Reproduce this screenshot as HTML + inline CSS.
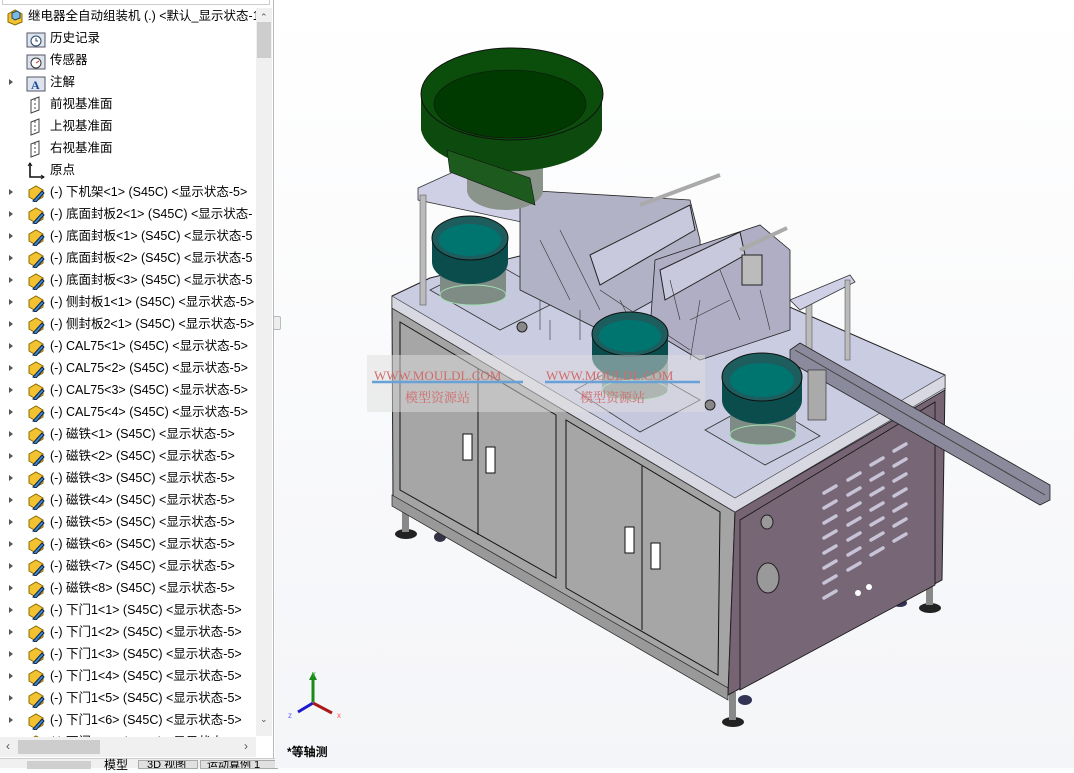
<!DOCTYPE html>
<html><head><meta charset="utf-8"><style>
*{margin:0;padding:0;box-sizing:border-box}
body{width:1074px;height:768px;overflow:hidden;background:#fff;font-family:"Liberation Sans","Noto Sans CJK SC",sans-serif;position:relative}
#tree{position:absolute;left:0;top:0;width:274px;height:768px;background:#fff;border-right:1px solid #b9b9b9}
.row{position:absolute;left:0;height:22px;font-size:12.5px;color:#000;white-space:nowrap;line-height:22px}
.row .ar{position:absolute;left:9px;top:8px;width:0;height:0;border-left:4px solid #555;border-top:3.5px solid transparent;border-bottom:3.5px solid transparent}
.row .ic{position:absolute;left:26px;top:3px;width:18px;height:16px}
.row .tx{position:absolute;left:50px;top:0}
#vs{position:absolute;left:256px;top:8px;width:16px;height:728px;background:#f0f0f0}
#vs .th{position:absolute;left:1px;top:14px;width:14px;height:36px;background:#cdcdcd}
#hs{position:absolute;left:0;top:737px;width:256px;height:20px;background:#f0f0f0}
#hs .th{position:absolute;left:18px;top:3px;width:82px;height:14px;background:#cdcdcd}
#tabs{position:absolute;left:0;top:758px;width:1074px;height:10px;background:#f0f0f0;border-top:1px solid #ccc;font-size:12px}
#vp{position:absolute;left:275px;top:0;width:799px;height:768px}
</style></head><body>
<div id="tree">
<div style="position:absolute;left:2px;top:0;width:268px;height:5px;border:1px solid #ccc;border-top:none"></div>
<div id="rows"></div>
<div id="vs"><div style="position:absolute;left:4px;top:4px;font-size:9px;color:#555">&#8963;</div><div class="th"></div><div style="position:absolute;left:4px;top:706px;font-size:9px;color:#555">&#8964;</div></div>
<div id="hs"><div style="position:absolute;left:6px;top:2px;font-size:12px;color:#555">&lsaquo;</div><div class="th"></div><div style="position:absolute;left:244px;top:2px;font-size:12px;color:#555">&rsaquo;</div></div>
</div>
<div id="tabs">
<div style="position:absolute;left:27px;top:2px;width:64px;height:8px;background:#cfcfcf"></div>
<div style="position:absolute;left:104px;top:-3px;font-size:12px">模型</div>
<div style="position:absolute;left:138px;top:1px;width:60px;height:9px;background:#e0e0e0;border:1px solid #aaa;font-size:11px;line-height:9px;padding-left:8px;overflow:hidden">3D 视图</div>
<div style="position:absolute;left:200px;top:1px;width:78px;height:9px;background:#e0e0e0;border:1px solid #aaa;font-size:11px;line-height:9px;padding-left:6px;overflow:hidden">运动算例 1</div>
</div>
<div id="vp">
<svg width="799" height="768" viewBox="275 0 799 768" xmlns="http://www.w3.org/2000/svg">
<defs><linearGradient id="bg" x1="0" y1="0" x2="0" y2="1"><stop offset="0" stop-color="#fff"/><stop offset="1" stop-color="#f4f5f8"/></linearGradient></defs>
<rect x="275" y="0" width="799" height="768" fill="url(#bg)"/>
<g fill="#222"><ellipse cx="406" cy="534" rx="11" ry="5"/><ellipse cx="733" cy="722" rx="11" ry="5"/><ellipse cx="930" cy="608" rx="11" ry="5"/><ellipse cx="440" cy="537" rx="6" ry="5" fill="#334"/><ellipse cx="745" cy="700" rx="7" ry="5" fill="#335"/><ellipse cx="900" cy="603" rx="7" ry="4" fill="#335"/></g>
<g fill="#888"><rect x="402" y="510" width="7" height="22"/><rect x="729" y="692" width="7" height="28"/><rect x="926" y="585" width="7" height="20"/></g>
<polygon points="392,308 735,512 728,695 393,500" fill="#a4a4a4" stroke="#222" stroke-width="1"/>
<polygon points="400,322 556,415 556,578 400,490" fill="#a6a6a6" stroke="#111" stroke-width="1"/>
<line x1="478" y1="368" x2="478" y2="535" stroke="#111"/>
<polygon points="566,420 720,512 718,675 566,588" fill="#a6a6a6" stroke="#111" stroke-width="1"/>
<line x1="642" y1="466" x2="642" y2="630" stroke="#111"/>
<polygon points="392,495 728,688 728,700 392,506" fill="#999" stroke="#222" stroke-width="0.7"/>
<rect x="463" y="434" width="9" height="26" fill="#fff" stroke="#111"/><rect x="486" y="447" width="9" height="26" fill="#fff" stroke="#111"/>
<rect x="625" y="527" width="9" height="26" fill="#fff" stroke="#111"/><rect x="651" y="543" width="9" height="26" fill="#fff" stroke="#111"/>
<polygon points="735,512 945,385 942,580 728,695" fill="#766474" stroke="#222" stroke-width="1"/>
<polygon points="740,520 935,402 935,585 740,690" fill="#776676" stroke="#111" stroke-width="0.8"/>
<g stroke="#c8c4d8" stroke-width="3.5" stroke-linecap="round">
<path d="M824,493l12,-7M824,508l12,-7M824,523l12,-7M824,538l12,-7M824,553l12,-7M824,568l12,-7M824,583l12,-7M824,598l12,-7"/>
<path d="M848,480l12,-7M848,495l12,-7M848,510l12,-7M848,525l12,-7M848,540l12,-7M848,555l12,-7M848,570l12,-7"/>
<path d="M871,465l12,-7M871,480l12,-7M871,495l12,-7M871,510l12,-7M871,525l12,-7M871,540l12,-7M871,555l12,-7"/>
<path d="M894,451l12,-7M894,466l12,-7M894,481l12,-7M894,496l12,-7M894,511l12,-7M894,526l12,-7M894,541l12,-7"/>
</g>
<ellipse cx="767" cy="522" rx="6" ry="7" fill="#999" stroke="#222"/>
<ellipse cx="768" cy="578" rx="11" ry="15" fill="#999" stroke="#222"/>
<circle cx="858" cy="593" r="3" fill="#fff"/><circle cx="869" cy="587" r="3" fill="#fff"/>
<polygon points="392,296 430,278 618,232 945,375 945,390 735,512 392,308" fill="#cacce2" stroke="#222" stroke-width="1"/>
<polygon points="392,296 735,498 945,375 945,388 735,512 392,308" fill="#d8d8e2" stroke="#333" stroke-width="0.6"/>
<polygon points="418,188 462,168 700,240 700,260 418,200" fill="#cfd0e6" stroke="#333" stroke-width="0.8"/>
<rect x="420" y="195" width="6" height="110" fill="#bbb" stroke="#444" stroke-width="0.5"/>
<rect x="806" y="300" width="6" height="70" fill="#bbb" stroke="#444" stroke-width="0.5"/>
<polygon points="790,300 850,275 855,282 800,310" fill="#cfd0e6" stroke="#333" stroke-width="0.8"/>
<rect x="845" y="280" width="5" height="80" fill="#bbb" stroke="#444" stroke-width="0.5"/>
<polygon points="430,290 490,260 560,300 500,330" fill="#c6c8de" stroke="#333" stroke-width="0.8"/>
<polygon points="575,390 630,360 700,400 640,432" fill="#c6c8de" stroke="#333" stroke-width="0.8"/>
<polygon points="705,430 760,400 820,436 765,465" fill="#c6c8de" stroke="#333" stroke-width="0.8"/>
<circle cx="522" cy="327" r="5" fill="#888" stroke="#222"/><circle cx="710" cy="405" r="5" fill="#888" stroke="#222"/>
<polygon points="520,190 690,200 700,240 700,275 600,330 520,290" fill="#b2b2c6" stroke="#222" stroke-width="0.8"/>
<polygon points="590,255 690,205 695,230 600,285" fill="#c9c9dd" stroke="#222"/>
<polygon points="655,260 760,225 790,250 790,330 700,360 650,330" fill="#b0aec4" stroke="#222" stroke-width="0.8"/>
<polygon points="660,270 740,232 745,255 665,300" fill="#c9c9dd" stroke="#222"/>
<rect x="742" y="255" width="20" height="30" fill="#bbb" stroke="#222"/>
<line x1="640" y1="205" x2="720" y2="175" stroke="#aaa" stroke-width="4"/>
<line x1="740" y1="250" x2="787" y2="228" stroke="#aaa" stroke-width="4"/>
<g stroke="#333" stroke-width="0.6" fill="none"><path d="M540,240l30,60M560,230l40,80M600,290l90,60M700,300l-10,60M620,300l20,40M540,300l0,30M580,310l0,30M550,320l0,20M670,280l10,40M720,270l20,50M760,290l10,40M690,320l40,-20"/></g>
<polygon points="790,350 800,343 1050,485 1050,500 1040,505 790,362" fill="#8a8a9c" stroke="#222" stroke-width="0.8"/>
<line x1="795" y1="350" x2="1045" y2="495" stroke="#444"/>
<rect x="808" y="370" width="18" height="50" fill="#aaa" stroke="#222" stroke-width="0.6"/>
<ellipse cx="505" cy="190" rx="38" ry="20" fill="#8a948a"/>
<rect x="467" y="165" width="76" height="25" fill="#8a948a"/>
<path d="M421,94 L421,130 A91,46 0 0 0 602,130 L602,94 Z" fill="#0d4a0d"/>
<ellipse cx="512" cy="94" rx="91" ry="46" fill="#0b4e0b" stroke="#111"/>
<ellipse cx="510" cy="104" rx="76" ry="34" fill="#003a00" stroke="#111" stroke-width="0.6"/>
<polygon points="447,150 530,178 535,205 450,172" fill="#1d5a1d" stroke="#111" stroke-width="0.6"/>
<g>
<rect x="440" y="255" width="66" height="40" fill="#7f8c86"/><ellipse cx="473" cy="295" rx="33" ry="10" fill="#7f8c86" stroke="#9fe0b0"/>
<path d="M432,240 L432,262 A38,22 0 0 0 508,262 L508,240 Z" fill="#0b4d4d"/>
<ellipse cx="470" cy="238" rx="38" ry="22" fill="#1d5d5d" stroke="#111"/><ellipse cx="470" cy="240" rx="31" ry="16" fill="#007570"/>
</g>
<g>
<rect x="602" y="350" width="66" height="40" fill="#7f8c86"/><ellipse cx="635" cy="390" rx="33" ry="10" fill="#7f8c86" stroke="#9fe0b0"/>
<path d="M592,335 L592,357 A38,22 0 0 0 668,357 L668,335 Z" fill="#0b4d4d"/>
<ellipse cx="630" cy="334" rx="38" ry="22" fill="#1d5d5d" stroke="#111"/><ellipse cx="630" cy="336" rx="31" ry="16" fill="#007570"/>
</g>
<g>
<rect x="730" y="395" width="66" height="40" fill="#7f8c86"/><ellipse cx="763" cy="435" rx="33" ry="10" fill="#7f8c86" stroke="#9fe0b0"/>
<path d="M722,378 L722,400 A40,24 0 0 0 802,400 L802,378 Z" fill="#0b4d4d"/>
<ellipse cx="762" cy="377" rx="40" ry="24" fill="#1d5d5d" stroke="#111"/><ellipse cx="762" cy="380" rx="32" ry="17" fill="#007570"/>
</g>
<rect x="367" y="355" width="338" height="57" fill="#ddd" opacity="0.5"/>
<line x1="372" y1="382" x2="523" y2="382" stroke="#68a0d8" stroke-width="2.5"/>
<line x1="545" y1="382" x2="700" y2="382" stroke="#68a0d8" stroke-width="2.5"/>
<text x="374" y="380" font-family="Liberation Serif,serif" font-size="13" fill="#d06b6b">WWW.MOULDL.COM</text>
<text x="546" y="380" font-family="Liberation Serif,serif" font-size="13" fill="#d06b6b">WWW.MOULDL.COM</text>
<text x="405" y="402" font-family="Noto Serif CJK SC,serif" font-size="13" fill="#d06b6b">模型资源站</text>
<text x="580" y="402" font-family="Noto Serif CJK SC,serif" font-size="13" fill="#d06b6b">模型资源站</text>
<line x1="313" y1="702" x2="313" y2="678" stroke="#1a8a1a" stroke-width="3"/><polygon points="309,680 317,680 313,672" fill="#1a8a1a"/>
<line x1="313" y1="703" x2="298" y2="712" stroke="#1a1acc" stroke-width="3"/>
<line x1="313" y1="703" x2="332" y2="713" stroke="#aa1a1a" stroke-width="3"/>
<text x="312" y="676" font-size="7" fill="#2a2">y</text><text x="288" y="718" font-size="8" fill="#66f">z</text><text x="337" y="718" font-size="8" fill="#f55">x</text>
<text x="287" y="756" font-family="Liberation Sans,Noto Sans CJK SC,sans-serif" font-size="12" font-weight="bold" fill="#000">*等轴测</text>
</svg>
</div>
<div style="position:absolute;left:273px;top:316px;width:8px;height:14px;background:#eee;border:1px solid #bbb;border-radius:2px"></div>
<script>
var items=[
[0,'top','继电器全自动组装机 (.) &lt;默认_显示状态-1:'],
[0,'hist','历史记录'],[0,'sens','传感器'],[1,'ann','注解'],
[0,'pl','前视基准面'],[0,'pl','上视基准面'],[0,'pl','右视基准面'],[0,'org','原点']];
var parts=['下机架&lt;1&gt; (S45C) &lt;显示状态-5&gt;','底面封板2&lt;1&gt; (S45C) &lt;显示状态-','底面封板&lt;1&gt; (S45C) &lt;显示状态-5','底面封板&lt;2&gt; (S45C) &lt;显示状态-5','底面封板&lt;3&gt; (S45C) &lt;显示状态-5','侧封板1&lt;1&gt; (S45C) &lt;显示状态-5&gt;','侧封板2&lt;1&gt; (S45C) &lt;显示状态-5&gt;','CAL75&lt;1&gt; (S45C) &lt;显示状态-5&gt;','CAL75&lt;2&gt; (S45C) &lt;显示状态-5&gt;','CAL75&lt;3&gt; (S45C) &lt;显示状态-5&gt;','CAL75&lt;4&gt; (S45C) &lt;显示状态-5&gt;'];
for(var i=1;i<=8;i++)parts.push('磁铁&lt;'+i+'&gt; (S45C) &lt;显示状态-5&gt;');
for(var i=1;i<=7;i++)parts.push('下门1&lt;'+i+'&gt; (S45C) &lt;显示状态-5&gt;');
parts.forEach(function(p){items.push([1,'part','(-) '+p]);});
var icons={
top:'<svg width="20" height="18"><path d="M3,6 L10,2 L17,6 L17,14 L10,17 L3,14Z" fill="#f2c230" stroke="#8a6a00"/><path d="M7,5 L12,3 L15,5 L15,10 L10,12 L7,10Z" fill="#7ab8e8" stroke="#245"/></svg>',
hist:'<svg width="20" height="18"><rect x="1" y="3" width="18" height="14" fill="#dde4ee" stroke="#556"/><circle cx="10" cy="11" r="5" fill="#fff" stroke="#246"/><path d="M10,8v3h2" stroke="#246" fill="none"/></svg>',
sens:'<svg width="20" height="18"><rect x="1" y="3" width="18" height="14" fill="#dde4ee" stroke="#556"/><circle cx="10" cy="11" r="5" fill="#fff" stroke="#333"/><path d="M10,11l3,-2" stroke="#d22"/></svg>',
ann:'<svg width="20" height="18"><rect x="1" y="3" width="18" height="14" fill="#dde4ee" stroke="#556"/><text x="5" y="15" font-size="12" font-weight="bold" fill="#1a4a9a" font-family="Liberation Serif">A</text></svg>',
pl:'<svg width="20" height="18"><path d="M5,4 L13,1 L13,14 L5,17Z" fill="#fff" stroke="#444"/><path d="M9,3v13" stroke="#444" stroke-dasharray="2,2"/></svg>',
org:'<svg width="20" height="18"><path d="M4,1v14h14" stroke="#111" stroke-width="1.6" fill="none"/><path d="M2,4l2,-3l2,3M15,13l3,2l-3,2" fill="none" stroke="#111"/></svg>',
part:'<svg width="20" height="18"><path d="M3,6 L10,2 L17,6 L17,13 L10,17 L3,13Z" fill="#f2c230" stroke="#8a6a00"/><path d="M7,17 L16,7 L18,9 L10,18Z" fill="#3a8ad8" stroke="#124"/></svg>'};
var h='';
items.forEach(function(it,k){var y=5+k*22;
h+='<div class="row" style="top:'+y+'px;width:256px;overflow:hidden">'+(it[0]?'<span class="ar"></span>':'')+'<span class="ic" style="'+(k==0?'left:5px':'')+'">'+icons[it[1]]+'</span><span class="tx" style="'+(k==0?'left:28px':'')+'">'+it[2]+'</span></div>';});
document.getElementById('rows').innerHTML=h;
</script>
</body></html>
